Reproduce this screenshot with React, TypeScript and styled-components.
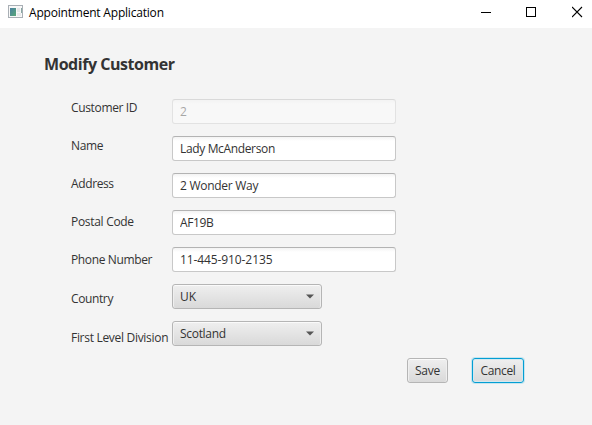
import React from "react";
import styled, { createGlobalStyle, css } from "styled-components";

const GlobalStyle = createGlobalStyle`
  *, *::before, *::after { box-sizing: border-box; }
  body { margin: 0; background: #f4f4f4; }
`;

const Window = styled.div`
  width: 592px;
  height: 425px;
  overflow: hidden;
  display: flex;
  flex-direction: column;
  background: #f4f4f4;
  color: #333;
  font: 12px/16px "Open Sans", "Noto Sans", sans-serif;
  white-space: nowrap;
`;

const TitleBar = styled.header`
  height: 28px;
  flex: none;
  display: flex;
  align-items: flex-start;
  padding: 5px 9px 0 8px;
  background: #fff;
  color: #000;
`;

const AppIcon = styled.svg`
  flex: none;
  margin-right: 6px;
`;

const AppName = styled.span`
  flex: 1;
  letter-spacing: -0.2px;
`;

const WindowControls = styled.div`
  display: flex;
  gap: 35px;
  padding-top: 1px;
`;

const Heading = styled.h1`
  margin: 24px 0 0 44px;
  font-size: 16px;
  line-height: 24px;
  font-weight: 700;
  letter-spacing: -0.45px;
`;

const Form = styled.form`
  display: grid;
  grid-template-columns: 101px 224px;
  margin: 23px 0 0 71px;
`;

const Labels = styled.div`
  display: flex;
  flex-direction: column;
  padding-top: 1px;
`;

const Label = styled.label<{ $gap: number; $spacing: number }>`
  height: 16px;
  margin-bottom: ${(p) => p.$gap}px;
  letter-spacing: ${(p) => p.$spacing}px;
`;

const Fields = styled.div`
  display: flex;
  flex-direction: column;
  gap: 12px;
`;

const TextField = styled.input<{ $spacing: number }>`
  width: 224px;
  height: 25px;
  padding: 0 7px;
  border: 1px solid #c8c8c8;
  border-top-color: #b3b3b3;
  border-radius: 3px;
  background: linear-gradient(#f3f3f3, #fff 4px);
  color: #333;
  font: inherit;
  letter-spacing: ${(p) => p.$spacing}px;
  outline: none;

  &:disabled {
    opacity: 0.4;
  }
`;

const raised = css`
  height: 25px;
  border: 1px solid #b5b5b5;
  border-radius: 3px;
  background: linear-gradient(#efefef, #d9d9d9);
  box-shadow: inset 0 1px #fafafa, inset 1px 0 #efefef, inset -1px 0 #efefef;
  color: #333;
  font: inherit;
`;

const ComboBox = styled.button<{ $spacing: number }>`
  ${raised}
  width: 150px;
  display: flex;
  align-items: center;
  justify-content: space-between;
  padding: 0 7px;
  letter-spacing: ${(p) => p.$spacing}px;
`;

const Actions = styled.footer`
  display: flex;
  gap: 24px;
  margin: 12px 0 0 407px;
`;

const Button = styled.button<{ $width: number; $focused?: boolean; $spacing: number }>`
  ${raised}
  width: ${(p) => p.$width}px;
  padding: 0;
  letter-spacing: ${(p) => p.$spacing}px;
  ${(p) =>
    p.$focused &&
    css`
      border-color: #039ed3;
      box-shadow: 0 0 0 1px #c6e5ef, inset 0 0 0 1px #d5e8ef;
    `}
`;

const labels = [
  { text: "Customer ID", gap: 22, spacing: -0.35 },
  { text: "Name", gap: 22, spacing: -0.35 },
  { text: "Address", gap: 22, spacing: -0.38 },
  { text: "Postal Code", gap: 22, spacing: -0.3 },
  { text: "Phone Number", gap: 23, spacing: -0.37 },
  { text: "Country", gap: 23, spacing: -0.38 },
  { text: "First Level Division", gap: 0, spacing: -0.3 },
];

const values = [
  { value: "2", disabled: true, spacing: 0 },
  { value: "Lady McAnderson", spacing: -0.35 },
  { value: "2 Wonder Way", spacing: -0.27 },
  { value: "AF19B", spacing: -0.35 },
  { value: "11-445-910-2135", spacing: -0.1 },
];

const Arrow = () => (
  <svg width="8" height="5" viewBox="0 0 8 5">
    <path d="M0 0.5h8L4 4.5z" fill="#555" />
  </svg>
);

export default function App() {
  return (
    <>
      <GlobalStyle />
      <Window>
        <TitleBar>
          <AppIcon width="15" height="13" viewBox="0 0 15 13" shapeRendering="crispEdges">
            <defs>
              <linearGradient id="pane" x1="0" y1="0" x2="1" y2="1">
                <stop offset="0" stopColor="#4a7fa0" />
                <stop offset="1" stopColor="#58a878" />
              </linearGradient>
            </defs>
            <rect x="0.5" y="0.5" width="14" height="12" fill="#f8f8f8" stroke="#a9afb5" />
            <rect x="2" y="3" width="6" height="8" fill="url(#pane)" />
            <rect x="9" y="3" width="3" height="4" fill="#e4e7e8" />
            <rect x="9" y="8" width="4" height="3" fill="#e8eaeb" />
            <rect x="13" y="3" width="1" height="5" fill="#87a7a4" />
          </AppIcon>
          <AppName>Appointment Application</AppName>
          <WindowControls>
            <svg width="10" height="12" viewBox="0 0 10 12">
              <path d="M0 6.5h10" stroke="#000" />
            </svg>
            <svg width="11" height="12" viewBox="0 0 11 12">
              <rect x="0.5" y="1.5" width="9" height="9" fill="none" stroke="#000" />
            </svg>
            <svg width="11" height="12" viewBox="0 0 11 12">
              <path d="M0 1l10 10M10 1l-10 10" stroke="#000" strokeWidth="1.1" />
            </svg>
          </WindowControls>
        </TitleBar>
        <Heading>Modify Customer</Heading>
        <Form>
          <Labels>
            {labels.map((l) => (
              <Label key={l.text} $gap={l.gap} $spacing={l.spacing}>
                {l.text}
              </Label>
            ))}
          </Labels>
          <Fields>
            {values.map((v) => (
              <TextField key={v.value} defaultValue={v.value} disabled={v.disabled} $spacing={v.spacing} />
            ))}
            <ComboBox type="button" $spacing={0}>
              UK
              <Arrow />
            </ComboBox>
            <ComboBox type="button" $spacing={-0.3}>
              Scotland
              <Arrow />
            </ComboBox>
          </Fields>
        </Form>
        <Actions>
          <Button $width={41} $spacing={-0.2}>Save</Button>
          <Button $width={52} $spacing={-0.35} $focused>Cancel</Button>
        </Actions>
      </Window>
    </>
  );
}
